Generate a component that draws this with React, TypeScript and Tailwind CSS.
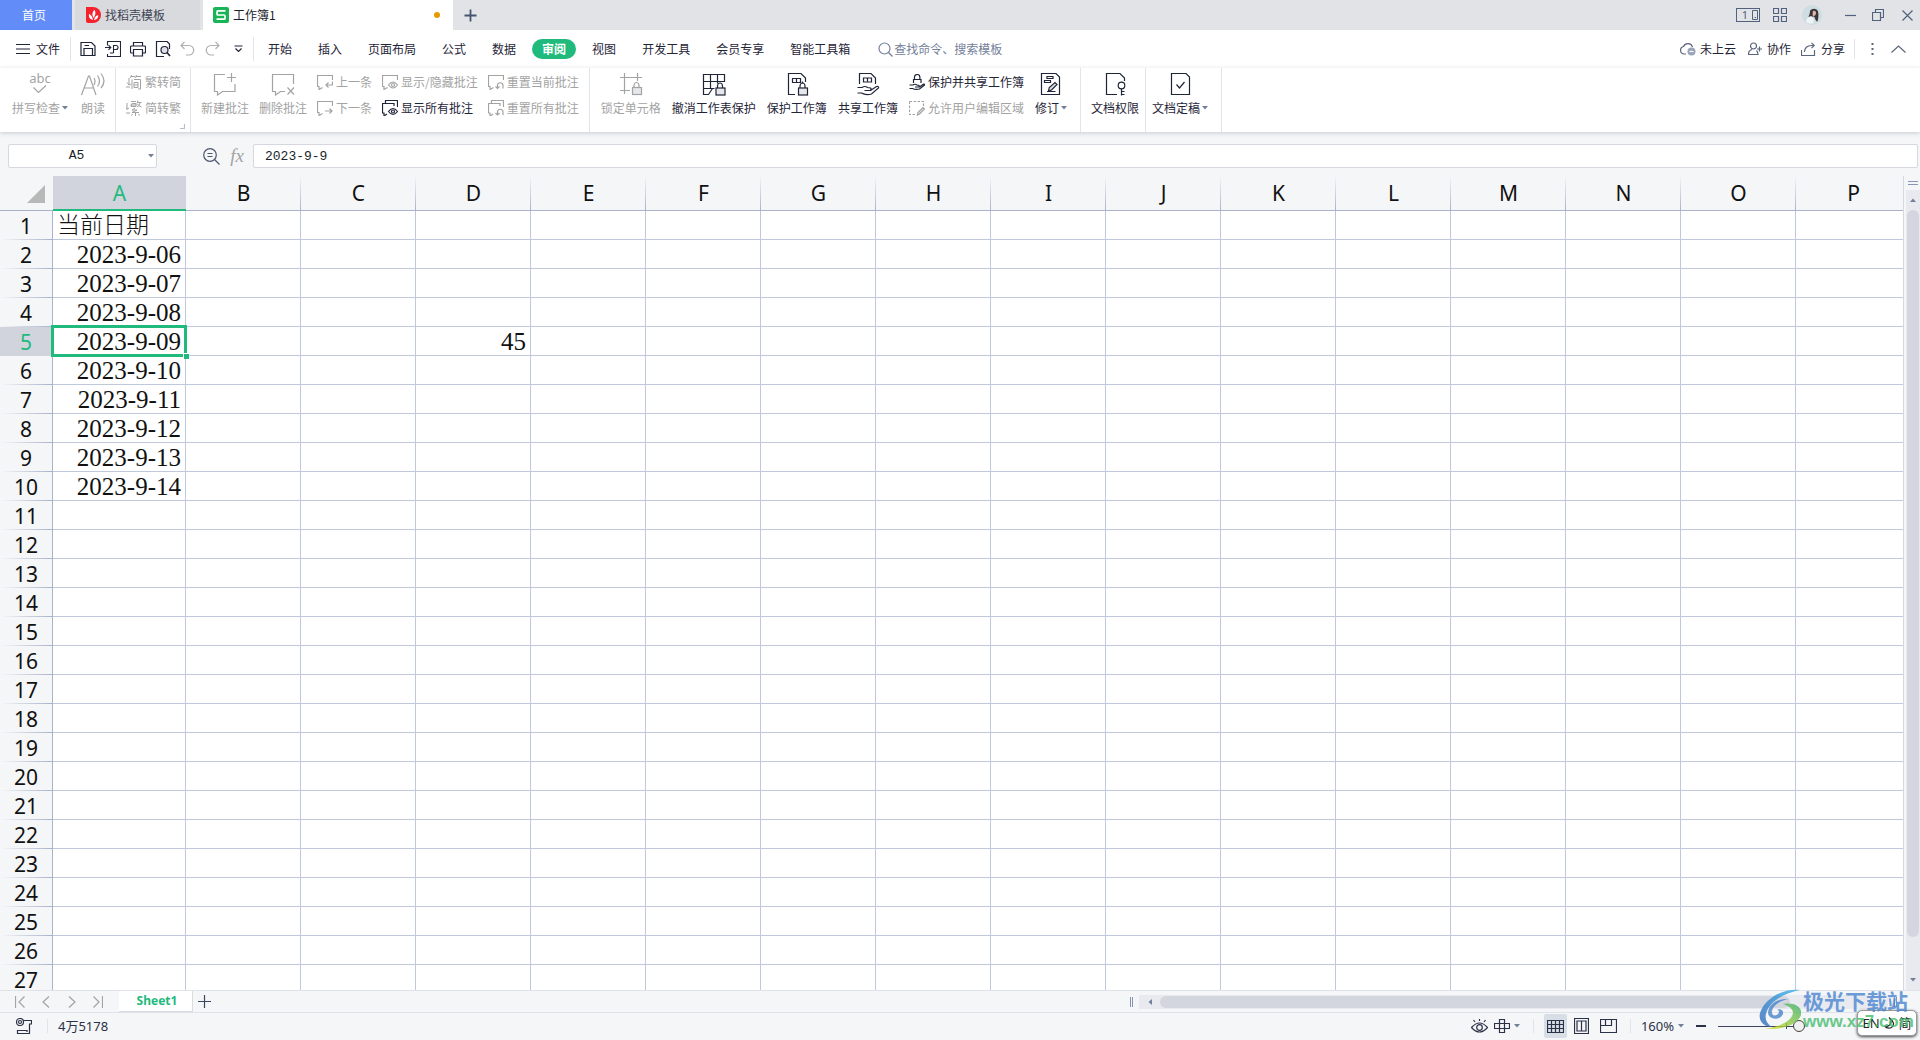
import type { ReactNode } from "react";

const menuTabs = [
  "开始",
  "插入",
  "页面布局",
  "公式",
  "数据",
  "审阅",
  "视图",
  "开发工具",
  "会员专享",
  "智能工具箱",
];

const columns = "ABCDEFGHIJKLMNOP".split("");
const rows = Array.from({ length: 27 }, (_, i) => i + 1);

const cells: Record<string, string> = {
  A1: "当前日期",
  A2: "2023-9-06",
  A3: "2023-9-07",
  A4: "2023-9-08",
  A5: "2023-9-09",
  A6: "2023-9-10",
  A7: "2023-9-11",
  A8: "2023-9-12",
  A9: "2023-9-13",
  A10: "2023-9-14",
  D5: "45",
};

function classNames(...classes: any) {
  return classes.filter(Boolean).join(" ");
}

type IconProps = { w?: number; h?: number; children: ReactNode; className?: string };

function Icon({ w = 16, h = w, children, className }: IconProps) {
  return (
    <svg
      width={w}
      height={h}
      viewBox={`0 0 ${w} ${h}`}
      fill="none"
      stroke="currentColor"
      strokeWidth="1.2"
      className={classNames("shrink-0", className)}
      aria-hidden="true"
    >
      {children}
    </svg>
  );
}

function Caret({ className }: { className?: string }) {
  return (
    <svg width="6" height="4" viewBox="0 0 6 4" className={classNames("shrink-0 fill-[#74809a]", className)} aria-hidden="true">
      <path d="M0 0h6L3 3.5z" />
    </svg>
  );
}

function Divider({ className }: { className?: string }) {
  return <span className={classNames("w-px shrink-0 bg-[#e2e4e9]", className)} />;
}

function BigButton({
  icon,
  label,
  disabled,
  caret,
}: {
  icon: ReactNode;
  label: string;
  disabled?: boolean;
  caret?: boolean;
}) {
  return (
    <button
      type="button"
      disabled={disabled}
      className={classNames(
        "flex flex-col items-center gap-1 pt-1",
        disabled ? "text-[#a3a3a3]" : "text-[#1f2538]",
        caret && "pr-[3px]"
      )}
    >
      {icon}
      <span className="flex items-center gap-[2px] leading-4 whitespace-nowrap">
        {label}
        {caret && <Caret />}
      </span>
    </button>
  );
}

function SmallButton({ icon, label, disabled }: { icon: ReactNode; label: string; disabled?: boolean }) {
  return (
    <button
      type="button"
      disabled={disabled}
      className={classNames(
        "flex h-[26px] items-center gap-[3px] whitespace-nowrap",
        disabled ? "text-[#a3a3a3]" : "text-[#1f2538]"
      )}
    >
      {icon}
      {label}
    </button>
  );
}

function Lock({ x, y }: { x: number; y: number }) {
  return (
    <g transform={`translate(${x} ${y})`}>
      <path d="M2 6V3.5a2.5 3 0 0 1 5 0V6" />
      <rect x=".5" y="5.5" width="9" height="7" fill="#e6e7ec" />
    </g>
  );
}

const noteSmall = "M5.5 13.5 2 15.500V12.500H.5V1.500H15.500V6";

function TitleBar() {
  return (
    <header className="flex h-[30px] shrink-0 items-center bg-[#e1e3e7]">
      <button type="button" className="h-full w-[72px] bg-[#628cf8] pr-1 text-white">
        首页
      </button>
      <button
        type="button"
        className="ml-[3px] flex h-full w-[125px] items-center gap-1 bg-[#d8dade] pl-[11px] text-[#3f4454]"
      >
        <svg width="15" height="16" viewBox="0 0 15 16" aria-hidden="true">
          <path d="M0 0h7a8 8 0 0 1 0 16H2a2 2 0 0 1-2-2z" fill="#f5222d" />
          <path d="M7 13C3.500 12 2.500 10 3 7c2 .8 3.500 2.600 4 6zM7.500 11C5.800 8 6 5 8.500 2.800 10 5.500 9.800 8 7.500 11zM8 13c.3-2.600 1.700-4.300 4.200-5 .2 2.800-1.200 4.600-4.200 5z" fill="#fff" />
        </svg>
        找稻壳模板
      </button>
      <button
        type="button"
        className="ml-[3px] flex h-full w-[250px] items-center gap-1 bg-white pr-[13px] pl-[10px] text-[#1b1f2c]"
      >
        <svg width="16" height="16" viewBox="0 0 16 16" aria-hidden="true">
          <rect width="16" height="16" rx="2" fill="#18b455" />
          <path d="M12.500 3.800H5a1 1 0 0 0-1 1V7a1 1 0 0 0 1 1h6a1 1 0 0 1 1 1v2.200a1 1 0 0 1-1 1H3.500" fill="none" stroke="#fff" strokeWidth="1.700" />
        </svg>
        <span>工作簿1</span>
        <span className="ml-auto size-[6px] rounded-full bg-[#e69a00]" />
      </button>
      <button type="button" aria-label="新建" className="ml-[11px] text-[#46546f]">
        <Icon w={13}>
          <path d="M6.500 .5v12M.5 6.500h12" strokeWidth="1.800" />
        </Icon>
      </button>

      <div className="ml-auto flex items-center pr-[7px] text-[#52617d]">
        <button
          type="button"
          className="flex h-[14px] w-6 items-center justify-end gap-1 border border-[#52617d] pr-px font-['Noto_Sans',sans-serif] text-[11px] leading-3"
        >
          1
          <Icon w={6} h={10}>
            <path d="M.5.5h5v9h-5zM2.500 7.500h1.500" strokeWidth="1" />
          </Icon>
        </button>
        <Icon w={14} className="ml-[13px]">
          <path d="M.5.5h5v5h-5zM8.500.5h5v5h-5zM.5 8.500h5v5h-5zM8.500 8.500h5v5h-5z" />
        </Icon>
        <svg width="20" height="20" viewBox="0 0 20 20" className="ml-[15px]" aria-hidden="true">
          <circle cx="10" cy="10" r="10" fill="#cddde2" />
          <path d="M8 6c1-3 7-3.500 8 .5.800 3 .5 6-.5 10-2 0-2-3-3.500-5L6.500 12c.5-2 1.500-3 1.500-6z" fill="#3c3638" />
          <path d="M11 6c1.500-.6 3 0 3 2s-1.200 3-2.500 3S10.500 9 11 6z" fill="#e0b7ac" />
          <path d="M4 17c0-3 2-5 5-6 2.500 1.500 3 4 2.500 7-3 1-5.500.5-7.500-1z" fill="#eef4f6" />
        </svg>
        <Divider className="mx-[11px] h-5 bg-[#c9ccd3]" />
        <button type="button" aria-label="最小化">
          <Icon w={11}>
            <path d="M0 5.500h11" />
          </Icon>
        </button>
        <button type="button" aria-label="还原" className="ml-[16px]">
          <Icon w={12}>
            <path d="M.5 3.500h8v8h-8zM3.500 3V.5h8v8H9" />
          </Icon>
        </button>
        <button type="button" aria-label="关闭" className="ml-[18px]">
          <Icon w={11}>
            <path d="m.5.5 10 10M10.500.5l-10 10" />
          </Icon>
        </button>
      </div>
    </header>
  );
}

function MenuBar() {
  return (
    <nav className="flex h-[38px] shrink-0 items-center bg-white text-[#1f2538]">
      <button type="button" className="ml-4 flex items-center gap-[6px]">
        <Icon w={14} h={10}>
          <path d="M0 .5h14M0 5h14M0 9.500h14" />
        </Icon>
        文件
      </button>
      <Divider className="mr-[9px] ml-[10px] h-6" />
      <div className="flex items-center gap-[9px]">
        <button type="button" aria-label="保存">
          <Icon>
            <path d="M1 1.500h10.500L15 5v9.500H1zM4 14V7.500h8.500V14M4.500 4.500H9" />
          </Icon>
        </button>
        <button type="button" aria-label="输出为PDF">
          <Icon>
            <path d="M2.500 4.500v-4h13v15h-13v-2.500M0 6.500h5.500M3.500 4.200 5.800 6.500 3.500 8.800M8.500 12V4.500h2.500a2 2 0 0 1 0 4H8.500M5 12h3.500" strokeWidth="1.1" />
          </Icon>
        </button>
        <button type="button" aria-label="打印">
          <Icon>
            <path d="M3.500 5V1.500h9V5M3.500 12H1.500a1 1 0 0 1-1-1V6a1 1 0 0 1 1-1h13a1 1 0 0 1 1 1v5a1 1 0 0 1-1 1h-2M3.500 8.500h9v6.500h-9z" />
          </Icon>
        </button>
        <button type="button" aria-label="打印预览">
          <Icon>
            <path d="M9 15.500H1.500V.5H12L14.500 3v5" />
            <circle cx="9.500" cy="9" r="3.500" fill="#dfe1e6" />
            <path d="m12 11.500 3 3.500" strokeWidth="1.600" />
          </Icon>
        </button>
        <button type="button" aria-label="撤消" className="text-[#b0b0b0]">
          <Icon>
            <path d="M4.500 1 1 4.500 4.500 8M1.500 4.500H9a4.500 4.500 0 0 1 0 9.500H6" />
          </Icon>
        </button>
        <button type="button" aria-label="恢复" className="text-[#b0b0b0]">
          <Icon>
            <path d="M10.500 1 14 4.500 10.500 8M13.500 4.500H6A4.500 4.500 0 0 0 6 14h3" />
          </Icon>
        </button>
        <button type="button" aria-label="自定义快速访问工具栏" className="ml-1">
          <Icon w={9} h={8}>
            <path d="M0.500 1h8M1.500 3.500l3 3 3-3" />
          </Icon>
        </button>
      </div>
      <Divider className="ml-[10px] mr-px h-6" />
      <div className="flex items-center">
        {menuTabs.map((tab) => (
          <a
            key={tab}
            href="#"
            aria-current={tab === "审阅" ? "page" : undefined}
            className={classNames(
              "mx-[3px] rounded-full px-[10px] leading-5 whitespace-nowrap",
              tab === "审阅" && "bg-[#1fba7c] font-bold text-white"
            )}
          >
            {tab}
          </a>
        ))}
      </div>
      <label className="ml-[15px] flex items-center gap-px text-[#74809a]">
        <Icon w={15}>
          <circle cx="6.500" cy="6.500" r="5.500" />
          <path d="m10.500 10.500 4 4" />
        </Icon>
        <input
          type="text"
          placeholder="查找命令、搜索模板"
          aria-label="查找命令、搜索模板"
          className="w-32 outline-none placeholder:text-[#74809a] placeholder:opacity-100"
        />
      </label>

      <div className="ml-auto flex items-center whitespace-nowrap">
        <button type="button" className="flex items-center gap-1">
          <Icon className="text-[#5b657b]">
            <path d="M6 13H4.500A3.800 3.800 0 0 1 3.500 5.500 4.800 4.800 0 0 1 12.500 6" />
            <circle cx="11.500" cy="10.500" r="4" fill="#9aa3b8" stroke="none" />
            <path d="M9.500 10.500h4" stroke="#fff" />
          </Icon>
          未上云
        </button>
        <button type="button" className="ml-3 flex items-center gap-[5px]">
          <Icon w={14} className="text-[#5b657b]">
            <circle cx="5.500" cy="4" r="3" />
            <path d="M4 7.500C1.500 8 .5 10 .5 12.500H10c0-2-.5-3-1.500-4M11.500 4.500v5M9 7h5" />
          </Icon>
          协作
        </button>
        <button type="button" className="ml-[10px] flex items-center gap-[5px]">
          <Icon w={15} h={14} className="text-[#5b657b]">
            <path d="M.5 8v5.500h13V8M3.500 10c0-4 2.500-6.500 7-6.500H13M10.500.8 13.200 3.500 10.500 6.200" />
          </Icon>
          分享
        </button>
        <Divider className="ml-[9px] h-5" />
        <button type="button" aria-label="更多" className="ml-4 text-[#5b657b]">
          <Icon w={3} h={12}>
            <path d="M1.500 0v2M1.500 5v2M1.500 10v2" strokeWidth="2" />
          </Icon>
        </button>
        <button type="button" aria-label="隐藏功能区" className="mr-[14px] ml-[17px] text-[#5b657b]">
          <Icon w={15} h={8}>
            <path d="M.5 7.500l7-6.500 7 6.500" />
          </Icon>
        </button>
      </div>
    </nav>
  );
}

function Ribbon() {
  return (
    <section className="relative z-10 flex h-[64px] shrink-0 gap-[10px] bg-white pl-3 shadow-[0_1px_4px_rgba(60,66,84,0.25)]">
      <BigButton
        disabled
        caret
        label="拼写检查"
        icon={
          <span className="flex h-6 flex-col items-center font-['Noto_Sans'] text-[13px] leading-[13px]">
            abc
            <Icon w={14} h={9}>
              <path d="m.5 2.500 5 5L13 .5" />
            </Icon>
          </span>
        }
      />
      <BigButton
        disabled
        label="朗读"
        icon={
          <Icon w={24}>
            <path d="M.5 23 7.500 4h1L15 23M3 16h10M13 6q2 3 0 7M16.500 3.500q4 5.500 0 11M20 1.500q6 7.500 0 14.500" />
          </Icon>
        }
      />
      <Divider />
      <div className="flex flex-col pt-px">
        <SmallButton
          disabled
          label="繁转简"
          icon={
            <Icon>
              <path d="M3 4v7M1 8.500l2 2.500 2-1M5.500 1l-1 3M5 2.500h4M10.500 1l-1 3M10 2.500h5M6 5.500V15M8 5.500h6.500V15H12M8 8.500h4v5H8zM8 11h4M0 13h4" strokeWidth="1" />
            </Icon>
          }
        />
        <SmallButton
          disabled
          label="简转繁"
          icon={
            <Icon>
              <path d="M5 1.500h5M6 3.500h4v3H5zM4.500 5h6M12 .5l-1 3M11 2.500h4.500M14 3q-.5 3-3 4M11.500 4q1 2 4 3M9 8 6 10h5l-5 2.500h7M9.500 12.500V16M6.500 14l-1 1.500M12.500 14l1 1.500M1 3v6M-.5 7 1 9.500 3 8M0 13h4" strokeWidth="1" />
            </Icon>
          }
        />
      </div>
      <div className="relative -ml-px w-px shrink-0 bg-[#e2e4e9]">
        <Icon w={5} className="absolute right-[6px] bottom-[3px] text-[#b5bccb]">
          <path d="M4.500 0v4.500H0" />
        </Icon>
      </div>
      <BigButton
        disabled
        label="新建批注"
        icon={
          <Icon w={24}>
            <path d="M12 2.500H1.500v17h3V23l5-3.500h12.500V12M18.500 1v9M14 5.500h9" />
          </Icon>
        }
      />
      <BigButton
        disabled
        label="删除批注"
        icon={
          <Icon w={24}>
            <path d="M22.500 12V2.500h-21v17h3V23l5-3.500H14M16.500 15.500l6.500 7M23 15.500l-6.500 7" />
          </Icon>
        }
      />
      <div className="flex flex-col pt-px">
        <SmallButton
          disabled
          label="上一条"
          icon={
            <Icon>
              <path d={noteSmall} />
              <path d="M15.500 7.500v3.500H9M11.500 8.500 9 11l2.500 2.500" />
            </Icon>
          }
        />
        <SmallButton
          disabled
          label="下一条"
          icon={
            <Icon>
              <path d={noteSmall} />
              <path d="M8 11h7M12.500 8.500 15 11l-2.500 2.500" />
            </Icon>
          }
        />
      </div>
      <div className="flex flex-col pt-px">
        <SmallButton
          disabled
          label="显示/隐藏批注"
          icon={
            <Icon>
              <path d={noteSmall} />
              <path d="M6.500 11q4.500-6 9 0-4.500 6-9 0z" />
              <circle cx="11" cy="11" r="1.500" />
            </Icon>
          }
        />
        <SmallButton
          label="显示所有批注"
          icon={
            <Icon>
              <path d="M5 14 2 16v-3H.5V3.500H12V6M3.500 3.500v-3h12V7" />
              <path d="M6.500 11.500q4.500-6 9 0-4.500 6-9 0z" />
              <circle cx="11" cy="11.500" r="1.500" />
            </Icon>
          }
        />
      </div>
      <div className="flex flex-col pt-px">
        <SmallButton
          disabled
          label="重置当前批注"
          icon={
            <Icon>
              <path d={noteSmall} />
              <path d="M9.500 14.500V11a2.800 2.800 0 0 1 5.500 0v3.500M7.500 12.500l2 2 2-2" />
            </Icon>
          }
        />
        <SmallButton
          disabled
          label="重置所有批注"
          icon={
            <Icon>
              <path d="M5 14 2 16v-3H.5V3.500H12V6M3.500 3.500v-3h12V7M9.500 15v-3.500a2.800 2.800 0 0 1 5.500 0V15M7.500 13l2 2 2-2" />
            </Icon>
          }
        />
      </div>
      <Divider />
      <div className="flex gap-[11px] pl-px">
        <BigButton
          disabled
          label="锁定单元格"
          icon={
            <Icon w={24}>
              <path d="M1 5.500h22M1 18.500h10M5.500 1v21M18.500 1v8" />
              <Lock x={13} y={10} />
            </Icon>
          }
        />
        <BigButton
          label="撤消工作表保护"
          icon={
            <Icon w={24}>
              <path d="M22.500 10V2.500H1.500v20h5l4-6M1.500 9.500h21M1.500 16.500h11M8.500 2.500v14M15.500 2.500v9" />
              <Lock x={13.5} y={10.5} />
            </Icon>
          }
        />
        <BigButton
          label="保护工作簿"
          icon={
            <Icon w={24}>
              <path d="M10 22.500H3.500v-21H16l4.500 4.500v4M7.500 6.500h8v4h-8zM11.500 6.500v4M17.500 9.500v2" />
              <Lock x={13} y={10.5} />
            </Icon>
          }
        />
        <BigButton
          label="共享工作簿"
          icon={
            <Icon w={24}>
              <path d="M3.500 12V1.500H15L19.500 6v6M7.500 6h8v4h-8zM11.500 6v4" />
              <path d="M1.500 15.500H6q3-2 5.500 0l3 .5q1.500 1.500-.5 2.500H8.500M14.500 18.500l6-4q2.500-.5 2 1.500l-7 6q-6 1.500-10-1h-4" />
            </Icon>
          }
        />
        <div className="flex flex-col pt-px">
          <SmallButton
            label="保护并共享工作簿"
            icon={
              <Icon>
                <path d="M5.500 5V3.200a2.700 2.700 0 0 1 5.400 0V5M4.500 9V5.500H12V9M.5 11H4q2-1.500 4 0l2 .5q.5 1-.5 1.500H6M10.500 13l4-3q1.500 0 1 1l-5 4q-4 1-7-.5h-3" />
              </Icon>
            }
          />
          <SmallButton
            disabled
            label="允许用户编辑区域"
            icon={
              <Icon>
                <path d="M.5 1.500h14V8M.5 1.500v13H7" strokeDasharray="2.500 1.500" />
                <path d="m8.500 15 .5-2.500 5-5 1.500 1.500-5 5z" fill="#e8e8e8" />
              </Icon>
            }
          />
        </div>
        <BigButton
          caret
          label="修订"
          icon={
            <Icon w={24}>
              <path d="M2.500 1.500H17L20.500 5v17.500h-18zM8 4.500h6v2H8zM5.500 8.500h6v2h-6zM8 19.500h8.500" />
              <path d="m9.500 19 .8-3.500 5.700-5 2 2-5.500 5.500z" fill="#dfe1e6" />
            </Icon>
          }
        />
      </div>
      <Divider />
      <div className="flex gap-[6px]">
        <BigButton
          label="文档权限"
          icon={
            <Icon w={24}>
              <path d="M14 22.500H3.500v-21H17l4.500 4.500v3" />
              <circle cx="18.500" cy="13.500" r="3.300" />
              <path d="M18.500 17v6.500M18.500 19.500h3M18.500 22.500h3" />
            </Icon>
          }
        />
        <Divider />
        <BigButton
          caret
          label="文档定稿"
          icon={
            <Icon w={24}>
              <path d="M3.500 1.500H18L21.500 5v17.500h-18zM8.500 12.500l3 3.500 5-6" />
            </Icon>
          }
        />
      </div>
      <Divider />
    </section>
  );
}

function FormulaBar() {
  return (
    <div className="flex h-[44px] shrink-0 items-center bg-[#f5f6f8] pt-1 pr-[2px] pl-2 font-['Liberation_Mono','Noto_Sans_CJK_SC',monospace] text-[13px] text-[#1b1f2c]">
      <div className="flex h-6 w-[149px] items-center rounded-[2px] border border-[#d5d8de] bg-white pr-[2px]">
        <input
          type="text"
          defaultValue="A5"
          aria-label="名称框"
          className="min-w-0 flex-1 pr-1 text-center outline-none"
        />
        <button type="button" aria-label="名称列表">
          <Caret />
        </button>
      </div>
      <button type="button" aria-label="浏览公式结果" className="ml-[46px] text-[#4b556e]">
        <Icon w={17}>
          <circle cx="7" cy="7" r="6.300" />
          <path d="m11.500 11.500 5 5M4.500 5.500h5M4.500 8.500h5" />
        </Icon>
      </button>
      <button
        type="button"
        aria-label="插入函数"
        className="mr-2 ml-[9px] w-4 font-['Liberation_Serif',serif] text-[19px] leading-6 text-[#a3a3a3] italic"
      >
        fx
      </button>
      <input
        type="text"
        defaultValue="2023-9-9"
        aria-label="编辑栏"
        className="h-6 min-w-0 flex-1 rounded-[2px] border border-[#d5d8de] bg-white px-[11px] outline-none"
      />
    </div>
  );
}

function Sheet() {
  return (
    <div className="flex min-h-0 flex-1 bg-[#f5f6f8]">
      <div className="min-w-0 flex-1 overflow-hidden border-r border-[#d5d8de] bg-white">
        <table className="w-[1911px] table-fixed border-separate border-spacing-0">
          <thead>
            <tr className="h-[35px] bg-[#f5f6f8] font-['Noto_Sans',sans-serif] text-[21px] leading-7 text-[#111]">
              <th className="w-[53px] border-b border-[#aab2cc] p-0">
                <svg width="18" height="18" viewBox="0 0 18 18" className="mt-[2px] ml-[27px] fill-[#b8b8b8]" aria-hidden="true">
                  <path d="M18 0v18H0z" />
                </svg>
              </th>
              {columns.map((col) => (
                <th
                  key={col}
                  scope="col"
                  className={classNames(
                    "bg-right bg-no-repeat bg-[length:1px_100%] p-0 font-normal",
                    col === "A"
                      ? "w-[133px] border-b-2 border-[#1fba7c] bg-[#d1d4dd] text-[#1fba7c]"
                      : "w-[115px] border-b border-[#aab2cc] bg-[linear-gradient(to_bottom,transparent,#aab2cc)]"
                  )}
                >
                  {col}
                </th>
              ))}
            </tr>
          </thead>
          <tbody className="font-['Liberation_Serif','Noto_Sans_CJK_SC',serif] text-[25px] leading-[26px] text-[#111]">
            {rows.map((row) => (
              <tr key={row} className="h-[29px]">
                <th
                  scope="row"
                  className={classNames(
                    "border-r border-[#aab2cc] bg-bottom bg-no-repeat bg-[length:100%_1px] p-0 font-['Noto_Sans',sans-serif] text-[21px] font-normal",
                    row === 5
                      ? "bg-[#d1d4dd] text-[#1fba7c]"
                      : "bg-[#f5f6f8] bg-[linear-gradient(to_right,transparent,#aab2cc)]"
                  )}
                >
                  {row}
                </th>
                {columns.map((col) => {
                  const id = `${col}${row}`;
                  return (
                    <td
                      key={id}
                      className={classNames(
                        "relative border-r border-b border-[#c0c8dc] p-0 pt-[2px] whitespace-nowrap",
                        id === "A1" ? "pl-1 text-[23px] font-light" : "pr-1 text-right",
                        id === "A5" && "z-10"
                      )}
                    >
                      {cells[id]}
                      {id === "A5" && (
                        <>
                          <span className="absolute -inset-x-[2px] -inset-y-[2px] border-3 border-[#1fba7c]" />
                          <span className="absolute -right-[4px] -bottom-[4px] size-[6px] border-t border-l border-white bg-[#1fba7c]" />
                        </>
                      )}
                    </td>
                  );
                })}
              </tr>
            ))}
          </tbody>
        </table>
      </div>
      <div className="flex w-4 shrink-0 flex-col items-center pl-[2px]">
        <Icon w={10} h={4} className="mt-[5px] mb-[5px] text-[#8a95b3]">
          <path d="M0 .5h10M0 3.500h10" />
        </Icon>
        <div className="flex w-full flex-1 flex-col items-center bg-[#e9eaf0]">
          <Caret className="my-2 rotate-180" />
          <span className="mb-[41px] w-3 flex-1 rounded-full bg-[#d3d6de]" />
          <Caret className="mb-2" />
        </div>
      </div>
    </div>
  );
}

function SheetTabs() {
  return (
    <div className="flex h-[23px] shrink-0 items-center border-y border-[#e0e2ea] bg-[#f5f6f8]">
      <div className="flex w-[103px] items-center justify-between pl-[15px] text-[#a3a3a3]">
        <button type="button" aria-label="第一张">
          <Icon w={10} h={12}>
            <path d="M.5 0v12M9.500.5 4 6l5.500 5.500" />
          </Icon>
        </button>
        <button type="button" aria-label="上一张">
          <Icon w={8} h={12}>
            <path d="M7 .5 1 6l6 5.500" />
          </Icon>
        </button>
        <button type="button" aria-label="下一张">
          <Icon w={8} h={12}>
            <path d="m1 .5 6 5.500-6 5.500" />
          </Icon>
        </button>
        <button type="button" aria-label="最后一张">
          <Icon w={10} h={12}>
            <path d="M9.500 0v12M.5.5 6 6 .5 11.500" />
          </Icon>
        </button>
      </div>
      <button
        type="button"
        className="ml-4 h-full w-[74px] border-r border-b border-[#d9dbe2] bg-white pl-[3px] font-['Noto_Sans',sans-serif] text-[12px] font-bold text-[#1fba7c]"
      >
        Sheet1
      </button>
      <button type="button" aria-label="新建工作表" className="ml-[5px] text-[#3b4560]">
        <Icon w={13}>
          <path d="M6.500 0v13M0 6.500h13" />
        </Icon>
      </button>
      <div className="ml-auto flex items-center pr-[23px]">
        <Icon w={3} h={10} className="text-[#8494ae]">
          <path d="M.5 0v10M2.500 0v10" strokeWidth="1" />
        </Icon>
        <div className="ml-[6px] flex h-[14px] w-[39vw] items-center bg-[#e9eaf0] pl-2">
          <Caret className="rotate-90" />
          <span className="ml-[7px] h-3 w-[85%] rounded-full bg-[#d3d6de]" />
        </div>
        <Icon w={3} h={10} className="ml-[6px] text-[#8494ae]">
          <path d="M.5 0v10M2.500 0v10" strokeWidth="1" />
        </Icon>
      </div>
    </div>
  );
}

function StatusBar() {
  return (
    <footer className="flex h-[27px] shrink-0 items-center bg-[#f5f6f8] pr-[115px] pb-px font-['Noto_Sans','Noto_Sans_CJK_SC',sans-serif] text-[13px] text-[#2b3146]">
      <Icon className="ml-4">
        <circle cx="4" cy="4" r="3.500" />
        <circle cx="4" cy="4" r="1.500" />
        <path d="M7.500 2.500H15.500V6H13.500V15.500H1.500V12.500H11V14" />
      </Icon>
      <Divider className="mr-[10px] ml-[15px] h-[14px]" />
      <span>4万5178</span>

      <div className="ml-auto flex items-center">
        <button type="button" aria-label="护眼模式">
          <Icon w={17}>
            <path d="M.5 9.500q8-9 16 0-8 9-16 0zM8.500 1v2M2.500 2l1.500 2M14.500 2 13 4" />
            <circle cx="8.500" cy="9.500" r="2.800" />
          </Icon>
        </button>
        <button type="button" aria-label="阅读模式" className="ml-[6px] flex items-center gap-1">
          <Icon>
            <path d="M5.500 1.500h5v4h5v5h-5v4h-5v-4h-5v-5h5zM5.500 5.500h5v5h-5z" />
          </Icon>
          <Caret />
        </button>
        <Divider className="mx-[10px] ml-[13px] h-[14px]" />
        <button type="button" aria-label="普通视图" className="rounded-[2px] bg-[#d8dee6] px-[3px] py-1">
          <Icon w={17} h={16}>
            <path d="M.5 2.500h16v12H.5zM.5 6.500h16M.5 10.500h16M4.500 2.500v12M8.500 2.500v12M12.500 2.500v12" />
          </Icon>
        </button>
        <button type="button" aria-label="分页预览" className="ml-[7px]">
          <Icon w={15} h={16}>
            <path d="M.5.5h14v15H.5zM3 3h9v10H3zM7.500 3v10" />
          </Icon>
        </button>
        <button type="button" aria-label="页面布局" className="ml-[11px]">
          <Icon w={17} h={16}>
            <path d="M.5 1.500h16v13H.5zM5.500 1.500v6h6v-6M.5 7.500h5" />
          </Icon>
        </button>
        <Divider className="ml-[13px] h-[14px]" />
        <button type="button" className="ml-[10px] flex items-center gap-1">
          160%
          <Caret />
        </button>
        <button type="button" aria-label="缩小" className="ml-3">
          <Icon w={10} h={2}>
            <path d="M0 1h10" strokeWidth="2" />
          </Icon>
        </button>
        <input
          type="range"
          aria-label="显示比例"
          min={10}
          max={160}
          defaultValue={160}
          className="ml-3 h-3 w-[87px] appearance-none bg-[linear-gradient(#3b4560,#3b4560),linear-gradient(#3b4560,#3b4560)] bg-[length:100%_1px,1px_6px] bg-[position:center,68px_3px] bg-no-repeat [&::-webkit-slider-thumb]:size-3 [&::-webkit-slider-thumb]:appearance-none [&::-webkit-slider-thumb]:rounded-full [&::-webkit-slider-thumb]:border [&::-webkit-slider-thumb]:border-[#444] [&::-webkit-slider-thumb]:bg-[#f0f0f0]"
        />
      </div>
    </footer>
  );
}

function Watermark() {
  return (
    <div className="pointer-events-none absolute right-[11px] bottom-2 z-20 flex items-center gap-[2px] opacity-80">
      <svg width="42" height="42" viewBox="0 0 42 42" aria-hidden="true">
        <defs>
          <linearGradient id="wave" x1="0" y1="1" x2="1" y2="0">
            <stop offset="0" stopColor="#3568b8" />
            <stop offset="1" stopColor="#35b4ee" />
          </linearGradient>
          <linearGradient id="leaf" x1="0" y1="1" x2="1" y2="0">
            <stop offset="0" stopColor="#e0e020" />
            <stop offset="1" stopColor="#38b070" />
          </linearGradient>
        </defs>
        <path d="M41 1C25-1 6 9 1 24c-2 8 4 14 12 14-6-4-8-9-5-16C12 12 25 4 41 1z" fill="url(#wave)" />
        <path d="M29 10C19 9 9 16 9 24c1 7 12 8 15 1 1-4-3-6-6-4 2 0 3 2 1 4-3 3-7 1-6-3 1-6 8-10 16-12z" fill="#4a86cc" />
        <path d="M24 15c11-2 20 3 18 11-3 9-18 15-36 14 14-2 27-8 28-16 0-4-4-7-10-9z" fill="url(#leaf)" />
      </svg>
      <div className="w-[106px] font-bold whitespace-nowrap">
        <p className="text-[21px] leading-6 text-[#4a86d0]">极光下载站</p>
        <p className="font-['Liberation_Sans',sans-serif] text-[17px] leading-5 text-[#45bd70]">www.xz7.com</p>
      </div>
    </div>
  );
}

function InputMethod() {
  return (
    <div className="absolute right-[3px] bottom-[4px] z-10 flex h-[26px] w-[60px] items-center justify-center gap-1 rounded-[5px] border border-[#999] bg-white font-['Noto_Sans','Noto_Sans_CJK_SC',sans-serif] text-[13px] text-[#222] shadow-[0_1px_3px_#444]">
      <span>EN</span>
      <Icon w={11} h={12}>
        <path d="M5 .5q4 5 0 8-2 1.500-4.500.5 3 3.500 7 1.500 5-4-2.500-10z" />
      </Icon>
      <span>简</span>
    </div>
  );
}

export default function App() {
  return (
    <div className="relative flex h-screen flex-col overflow-hidden font-['Noto_Sans_CJK_SC',sans-serif] text-[12px] leading-4">
      <TitleBar />
      <MenuBar />
      <Ribbon />
      <FormulaBar />
      <Sheet />
      <SheetTabs />
      <StatusBar />
      <InputMethod />
      <Watermark />
    </div>
  );
}
